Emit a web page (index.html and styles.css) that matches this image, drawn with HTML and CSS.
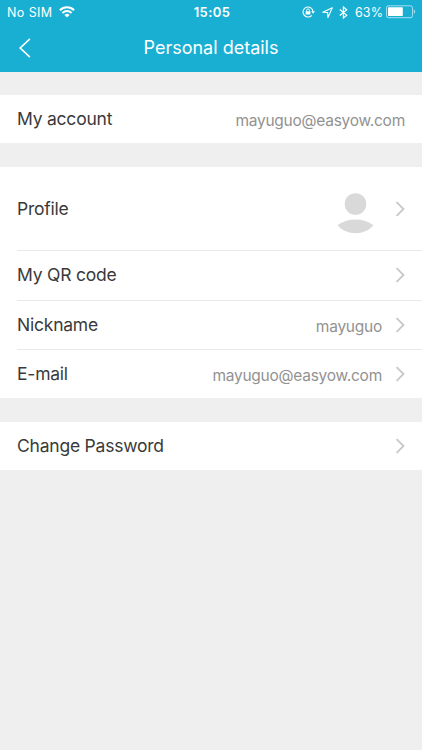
FILE: index.html
```html
<!DOCTYPE html>
<html lang="en">
<head>
  <meta charset="UTF-8">
  <meta name="viewport" content="width=device-width, initial-scale=1.0">
  <title>Personal details</title>
  <link rel="stylesheet" href="styles.css">
</head>
<body>

  <header class="header">
    <div class="status-bar">
      <div class="status-left">
        <span class="carrier">No SIM</span>
        <svg class="wifi" width="16" height="12" viewBox="0 0 16 12">
          <g fill="none" stroke="#fff" stroke-width="2">
            <path d="M0.9 4.2a10.1 10.1 0 0 1 14.2 0"/>
            <path d="M3.4 7a6.5 6.5 0 0 1 9.2 0"/>
          </g>
          <path fill="#fff" d="M8 11.6L5.4 9a3.7 3.7 0 0 1 5.2 0z"/>
        </svg>
      </div>
      <div class="time">15:05</div>
      <div class="status-right">
        <svg class="lock" width="13" height="12" viewBox="0 0 13 12">
          <path fill="none" stroke="#fff" stroke-width="1.1" d="M9.8 9.3a5 5 0 1 1 1.2-4"/>
          <path fill="#fff" d="M9.2 5.2h3.8l-1.9 2.6zM3.6 5.3h4.8v3.3H3.6z"/>
          <path fill="none" stroke="#fff" stroke-width="0.9" d="M4.6 5.6V4.3a1.4 1.4 0 0 1 2.8 0v1.3"/>
        </svg>
        <svg class="location" width="11" height="11" viewBox="0 0 11 11">
          <path fill="none" stroke="#fff" stroke-width="1.1" stroke-linejoin="round" d="M10.3 0.8L0.8 5.2l4.8.3.3 4.9z"/>
        </svg>
        <svg class="bluetooth" width="9" height="13" viewBox="0 0 9 13">
          <path fill="none" stroke="#fff" stroke-width="1.2" d="M0.8 3.5l6.9 5.8-3.3 2.7V1l3.3 2.7L0.8 9.5"/>
        </svg>
        <span class="percent">63%</span>
        <svg class="battery" width="30" height="14" viewBox="0 0 30 14">
          <rect x="0.5" y="0.8" width="26" height="11.9" rx="2" fill="none" stroke="#fff" stroke-opacity="0.6"/>
          <rect x="2" y="2.3" width="14.8" height="8.6" rx="0.6" fill="#fff"/>
          <path fill="#fff" fill-opacity="0.6" d="M27.8 4.6q1.4.6 1.4 2.1t-1.4 2.1z"/>
        </svg>
      </div>
    </div>
    <div class="nav-bar">
      <svg class="back" width="12" height="20" viewBox="0 0 12 20">
        <path fill="none" stroke="#fff" stroke-width="1.6" d="M10.9 0.8L1.2 10l9.7 9.2"/>
      </svg>
      <h1 class="title">Personal details</h1>
    </div>
  </header>

  <main>
    <section class="group">
      <div class="row">
        <span class="label">My account</span>
        <span class="value">mayuguo@easyow.com</span>
      </div>
    </section>

    <section class="group">
      <div class="row row-profile">
        <span class="label">Profile</span>
        <svg class="avatar" width="38" height="42" viewBox="0 0 38 42">
          <circle cx="18.5" cy="11" r="10.8" fill="#d9d9d9"/>
          <path fill="#d9d9d9" d="M0.5 32.2Q8 26.4 18.5 26.4T36.5 32.2Q29.5 40.2 18.5 40.2T0.5 32.2z"/>
        </svg>
        <svg class="chevron" width="10" height="16" viewBox="0 0 10 16"><path d="M1.6 1.1L8.5 8l-6.9 6.9"/></svg>
      </div>
      <div class="row row-qr">
        <span class="label">My QR code</span>
        <svg class="chevron" width="10" height="16" viewBox="0 0 10 16"><path d="M1.6 1.1L8.5 8l-6.9 6.9"/></svg>
      </div>
      <div class="row">
        <span class="label">Nickname</span>
        <span class="value">mayuguo</span>
        <svg class="chevron" width="10" height="16" viewBox="0 0 10 16"><path d="M1.6 1.1L8.5 8l-6.9 6.9"/></svg>
      </div>
      <div class="row">
        <span class="label">E-mail</span>
        <span class="value">mayuguo@easyow.com</span>
        <svg class="chevron" width="10" height="16" viewBox="0 0 10 16"><path d="M1.6 1.1L8.5 8l-6.9 6.9"/></svg>
      </div>
    </section>

    <section class="group">
      <div class="row">
        <span class="label">Change Password</span>
        <svg class="chevron" width="10" height="16" viewBox="0 0 10 16"><path d="M1.6 1.1L8.5 8l-6.9 6.9"/></svg>
      </div>
    </section>
  </main>

</body>
</html>
```

FILE: styles.css
```css
* {
  box-sizing: border-box;
}
body {
  margin: 0;
  min-height: 100vh;
  font-family: Inter, Roboto, sans-serif;
  background-color: #efefef;
  color: #3a3a3a;
}
svg {
  display: block;
  flex-shrink: 0;
}
.header {
  height: 72px;
  background-color: #19afd3;
  color: white;
}
.status-bar {
  display: grid;
  grid-template-columns: 1fr auto 1fr;
  align-items: center;
  height: 24px;
  padding: 0 6px 0 7px;
  font-size: 12.5px;
}
.status-left,
.status-right {
  display: flex;
  align-items: center;
}
.status-right {
  justify-content: flex-end;
}
.carrier {
  letter-spacing: 0.4px;
}
.wifi {
  margin-left: 6px;
  margin-top: -1px;
}
.time {
  padding-left: 1px;
  font-size: 13px;
  font-weight: 600;
  letter-spacing: 0.4px;
}
.location {
  margin-left: 7px;
}
.bluetooth {
  margin-left: 6px;
}
.percent {
  margin: 0 3px 0 7px;
  letter-spacing: 0.1px;
}
.nav-bar {
  display: grid;
  grid-template-columns: 40px 1fr 40px;
  align-items: center;
  height: 48px;
}
.back {
  margin-left: 19px;
}
.title {
  margin: 0;
  padding-bottom: 1px;
  font-size: 18px;
  font-weight: 400;
  text-align: center;
}
main {
  padding-top: 23px;
}
.group {
  margin-bottom: 24px;
  padding-left: 17px;
  background-color: white;
}
.row {
  display: flex;
  align-items: center;
  height: 49px;
  padding-right: 17px;
  border-bottom: 1px solid #e9e9e9;
}
.row:last-child {
  height: 48px;
  border-bottom: none;
}
.row-profile {
  height: 84px;
}
.row-qr {
  height: 50px;
}
.label {
  margin-right: auto;
  padding-bottom: 2px;
  font-size: 17.5px;
  letter-spacing: -0.22px;
}
.row-profile .label {
  padding-bottom: 0;
}
.value {
  padding-top: 3px;
  font-size: 15.5px;
  letter-spacing: -0.25px;
  color: #929292;
}
.avatar {
  margin-top: 10px;
}
.chevron {
  margin-left: 13px;
}
.chevron path {
  fill: none;
  stroke: #c7c7cc;
  stroke-width: 1.8;
}
.avatar + .chevron {
  margin-left: 20px;
}
.row-qr .chevron {
  margin-bottom: 1px;
}
```
